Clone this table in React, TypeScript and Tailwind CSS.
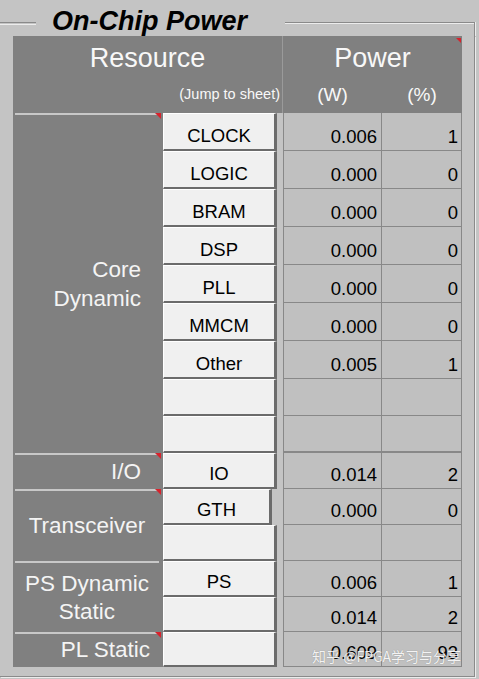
import React from "react";

type Row = {
  h: string;
  btn: string;
  w: string;
  p: string;
  narrow?: boolean;
  thick?: boolean;
};

const rows: Row[] = [
  { h: "h-[38px]", btn: "CLOCK", w: "0.006", p: "1" },
  { h: "h-[38px]", btn: "LOGIC", w: "0.000", p: "0" },
  { h: "h-[38px]", btn: "BRAM", w: "0.000", p: "0" },
  { h: "h-[38px]", btn: "DSP", w: "0.000", p: "0" },
  { h: "h-[38px]", btn: "PLL", w: "0.000", p: "0" },
  { h: "h-[38px]", btn: "MMCM", w: "0.000", p: "0" },
  { h: "h-[38px]", btn: "Other", w: "0.005", p: "1" },
  { h: "h-[37px]", btn: "", w: "", p: "" },
  { h: "h-[37px]", btn: "", w: "", p: "", thick: true },
  { h: "h-[36px]", btn: "IO", w: "0.014", p: "2" },
  { h: "h-[36px]", btn: "GTH", w: "0.000", p: "0", narrow: true },
  { h: "h-[36px]", btn: "", w: "", p: "" },
  { h: "h-[36px]", btn: "PS", w: "0.006", p: "1" },
  { h: "h-[35px]", btn: "", w: "0.014", p: "2" },
  { h: "h-[35px]", btn: "", w: "0.609", p: "93" },
];

function RedMark() {
  return (
    <div className="absolute top-0 right-0 w-0 h-0 border-t-[6px] border-t-[#d8222c] border-l-[6px] border-l-transparent" />
  );
}

function Label({
  h,
  children,
  align,
  mark,
}: {
  h: string;
  children: React.ReactNode;
  align: string;
  mark?: boolean;
}) {
  return (
    <div className={`relative flex flex-col ${h}`}>
      <div className="h-[2px] mx-[2px] bg-[#c8c8c8]" />
      <div className={`flex-1 flex items-center ${align}`}>{children}</div>
      {mark && <RedMark />}
    </div>
  );
}

export default function App() {
  return (
    <div className="relative w-[479px] h-[679px] overflow-hidden bg-[#c4c4c4] font-['Liberation_Sans',Arial,sans-serif]">
      <div className="w-[475px] pt-[9px]">
        {/* title row */}
        <div className="flex h-[27px]">
          <div className="w-[36px] mt-[13px] h-[2px] border-t border-[#8a8a8a] shadow-[0_1px_0_#ececec]" />
          <div className="self-start pl-[16px] pr-[38px] text-[27px] leading-[24px] font-bold italic text-black">
            On-Chip Power
          </div>
          <div className="flex-1 mt-[13px] border-t border-r border-[#8a8a8a] shadow-[inset_0_1px_0_#ececec,1px_0_0_#ececec]" />
        </div>

        {/* group body */}
        <div className="pl-[13px] pr-[12px] pb-[9px] border-r border-b border-[#8a8a8a] shadow-[1px_1px_0_#ececec]">
          <div className="w-[449px]">
            {/* header */}
            <div className="relative grid grid-cols-[269px_1px_99px_80px] grid-rows-[44px_33px] bg-[#808080] text-[#f8f8f8]">
              <div className="col-start-1 row-start-1 flex items-center justify-center text-[27px] leading-[44px]">
                Resource
              </div>
              <div className="col-start-2 row-start-1 row-span-2 bg-[#9a9a9a]" />
              <div className="col-start-3 col-span-2 row-start-1 flex items-center justify-center text-[27px] leading-[44px]">
                Power
              </div>
              <div className="col-start-1 row-start-2 flex items-end justify-end pr-[2px] pb-[12px] text-[14.5px] leading-none">
                (Jump to sheet)
              </div>
              <div className="col-start-3 row-start-2 flex items-end justify-center pb-[9px] text-[19px] leading-none">
                (W)
              </div>
              <div className="col-start-4 row-start-2 flex items-end justify-center pb-[9px] text-[19px] leading-none">
                (%)
              </div>
              <div className="absolute top-[2px] right-[1px] w-0 h-0 border-t-[5px] border-t-[#d8222c] border-l-[5px] border-l-transparent" />
            </div>

            {/* body */}
            <div className="flex">
              {/* label column */}
              <div className="w-[148px] flex flex-col bg-[#808080] text-[#f4f4f4] text-[22.5px]">
                <Label h="h-[340px]" align="justify-end pr-[20px] text-right leading-[29px]" mark>
                  <div>
                    Core
                    <br />
                    Dynamic
                  </div>
                </Label>
                <Label h="h-[36px]" align="justify-end pr-[20px] leading-none" mark>
                  I/O
                </Label>
                <Label h="h-[72px]" align="justify-center leading-none" mark>
                  Transceiver
                </Label>
                <Label h="h-[71px]" align="justify-center text-center leading-[28px]">
                  <div>
                    PS Dynamic
                    <br />
                    Static
                  </div>
                </Label>
                <Label h="h-[35px]" align="justify-end pr-[11px] leading-none" mark>
                  PL Static
                </Label>
              </div>

              {/* rows */}
              <div className="flex flex-col">
                {rows.map((r, i) => (
                  <div
                    key={i}
                    className={`grid grid-cols-[116px_6px_99px_80px] ${r.h}`}
                  >
                    <div className="flex">
                      <div className="w-[2px] bg-[#808080]" />
                      <div
                        className={`flex-1 flex items-end justify-center pb-[4px] bg-[#f0f0f0] border-t border-l border-t-white border-l-white border-r-[3px] border-b-2 border-r-[#6b6b6b] border-b-[#6b6b6b] text-[18.5px] leading-none text-black ${
                          r.narrow ? "mr-[5px]" : ""
                        }`}
                      >
                        {r.btn}
                      </div>
                    </div>
                    <div />
                    <div
                      className={`flex items-end justify-end pr-[4px] pb-[4px] bg-[#c0c0c0] border-l border-r border-[#888888] text-[18.5px] leading-none text-black ${
                        r.thick ? "border-b-2" : "border-b"
                      }`}
                    >
                      {r.w}
                    </div>
                    <div
                      className={`flex items-end justify-end pr-[3px] pb-[4px] bg-[#c0c0c0] border-r border-[#888888] text-[18.5px] leading-none text-black ${
                        r.thick ? "border-b-2" : "border-b"
                      }`}
                    >
                      {r.p}
                    </div>
                  </div>
                ))}
              </div>
            </div>
          </div>
        </div>
      </div>

      {/* watermark */}
      <div className="absolute left-[312px] top-[648px] text-[14px] leading-[16px] text-white/90 font-['Noto_Sans_CJK_SC','Liberation_Sans',sans-serif] [text-shadow:0_0_1px_rgba(0,0,0,0.35)] whitespace-nowrap">
        知乎 @FPGA学习与分享
      </div>
    </div>
  );
}
